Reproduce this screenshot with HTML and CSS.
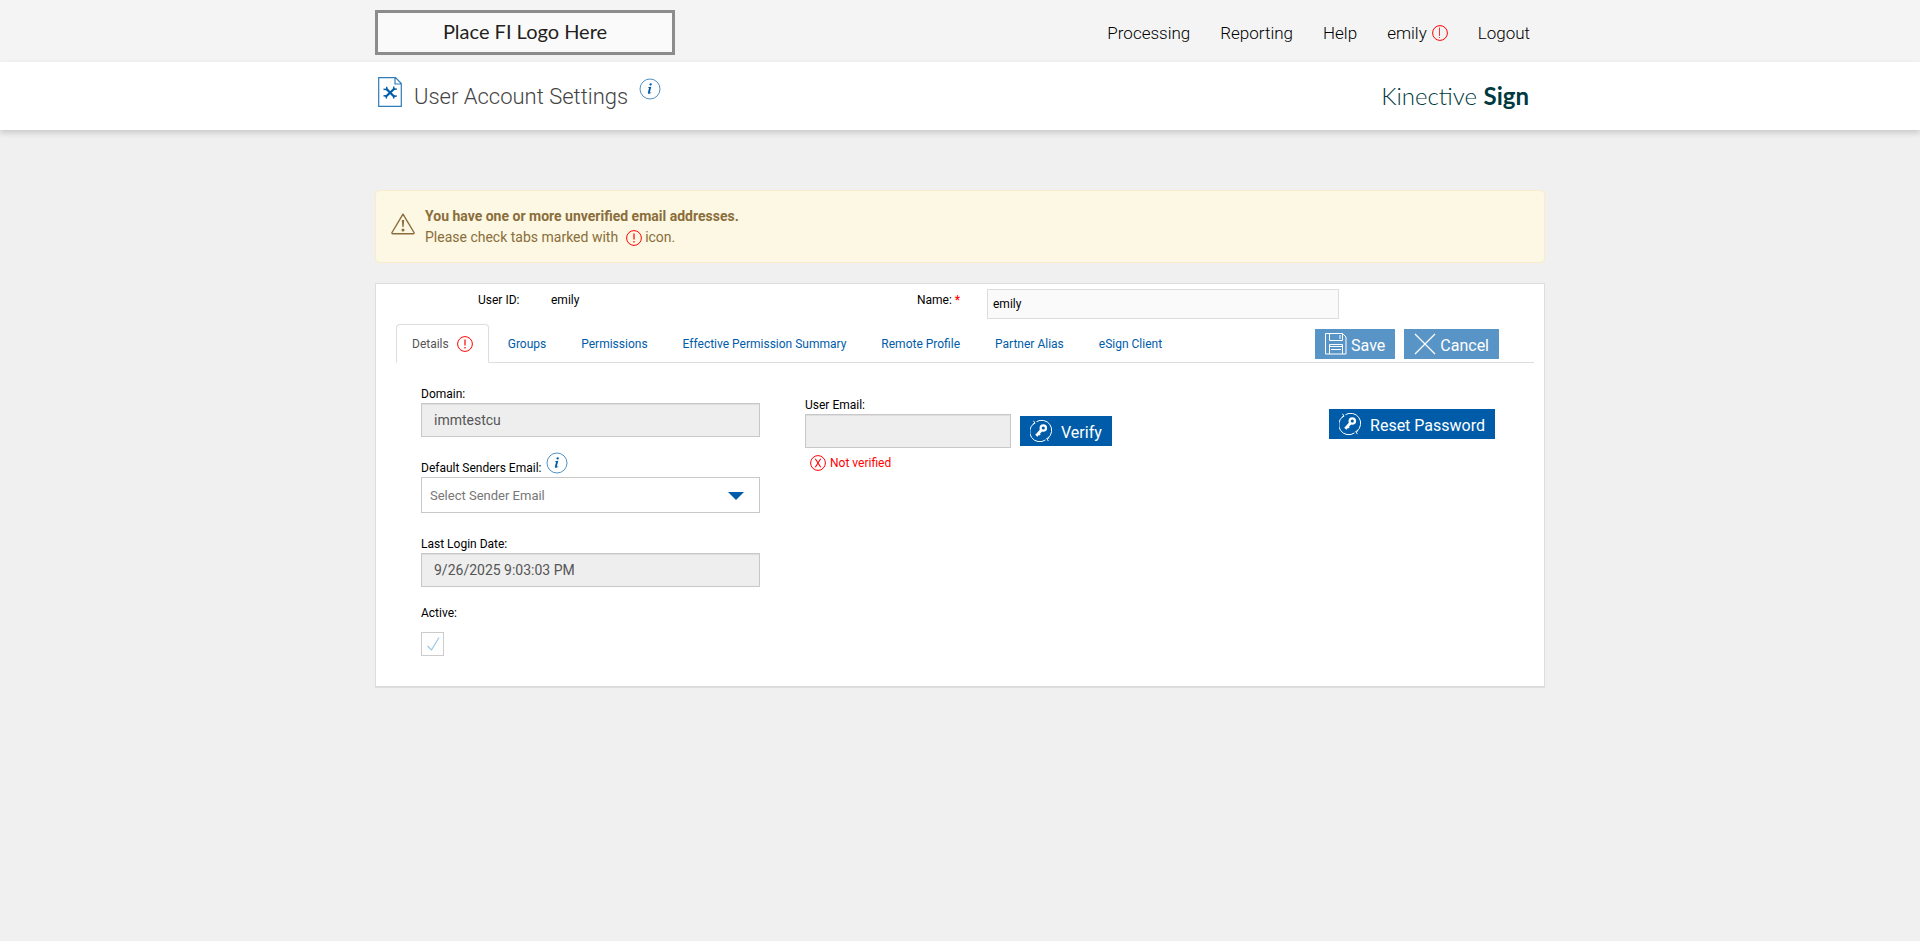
FILE: index.html
```html
<!DOCTYPE html>
<html lang="en">
<head>
<meta charset="utf-8">
<title>User Account Settings</title>
<link rel="stylesheet" href="styles.css">
</head>
<body>
<svg class="sprite" aria-hidden="true">
  <symbol id="info" viewBox="0 0 22 22">
    <circle cx="11" cy="11" r="10" fill="#fff" stroke="#3c84bc" stroke-width=".9"/>
    <path d="M11.7 5.200a1.200 1.200 0 1 1-.1 2.400 1.200 1.200 0 0 1 .1-2.400zM8.900 9.300l3.400-.5-1.500 5.700c-.1.500.4.300 1.200-.6l.4.300c-1.200 1.800-3.900 2.200-3.500.3l1.100-4.200c.1-.5-.4-.5-1.100-.5z" fill="#005ca9"/>
  </symbol>
  <symbol id="alert" viewBox="0 0 16 16">
    <circle cx="8" cy="8" r="7.400" fill="none" stroke="currentColor"/>
    <path d="M8 3.500v6M8 11v1.500" fill="none" stroke="currentColor" stroke-width="1.200"/>
  </symbol>
  <symbol id="alert-thin" viewBox="0 0 16 16">
    <circle cx="8" cy="8" r="7.400" fill="none" stroke="currentColor"/>
    <path d="M7.500 2.500v8.500M7.500 12v1" fill="none" stroke="currentColor" stroke-width=".8"/>
  </symbol>
  <symbol id="key" viewBox="0 0 22 22">
    <g fill="none" stroke="#fff">
      <path d="M4 3.500A10 10 0 0 0 15.500 19.900M18 18A10 10 0 0 0 6.500 1.700" stroke-width="1"/>
      <path d="M3.500.800l1.500 2.400-2.200 1M18.300 21l-1.600-2.600 2.600-.6" stroke-width="1"/>
      <circle cx="13.300" cy="8" r="2.700" stroke-width="2.200"/>
      <path d="M11.300 10.200l-5 5.500" stroke-width="2.800"/>
      <path d="M8.500 13.500l1.700 1.600" stroke-width="1.300"/>
    </g>
  </symbol>
</svg>

<header>
  <div class="topbar">
    <div class="container topbar-row">
      <div class="fi-logo">Place FI Logo Here</div>
      <nav class="main-nav" aria-label="Main">
        <a href="#">Processing</a>
        <a href="#">Reporting</a>
        <a href="#">Help</a>
        <a href="#" class="nav-user">emily <svg class="icon-alert"><use href="#alert-thin"/></svg></a>
        <a href="#">Logout</a>
      </nav>
    </div>
  </div>
  <div class="titlebar">
    <div class="container title-row">
      <svg class="page-icon" viewBox="0 0 24 30">
        <path d="M.7.700h16.800l5.800 5.800v22.800H.7zM17 .7v6.300h6.300" fill="#fff" stroke="#2f7cb8" stroke-width="1.200"/>
        <path d="M8 11.500l8.500 8.500M16.500 11.500L8 19.500" stroke="#005ca9" stroke-width="2.300"/>
        <path d="M5.500 12.300l3 .3.300-2.800M15.700 9.500l.3 2.800 2.800-.3M5.500 18.800l2.500.2.500 2.500M15.500 21.500l.5-2.300 2.800-.2" fill="none" stroke="#005ca9" stroke-width="1.400"/>
      </svg>
      <h1>User Account Settings</h1>
      <svg class="icon-info title-info"><use href="#info"/></svg>
      <div class="brand">Kinective <b>Sign</b></div>
    </div>
  </div>
</header>

<main class="container">
  <div class="notice" role="alert">
    <svg class="warn" viewBox="0 0 24 22">
      <path d="M12 1.200L23 19.500q.4 1.200-.8 1.300H1.800Q.6 20.700 1 19.500z" fill="none" stroke="#8a6d3b" stroke-width="1.400" stroke-linejoin="round"/>
      <path d="M10.800 7h2.400l-.6 7h-1.200z" fill="#8a6d3b"/><circle cx="12" cy="17" r="1.500" fill="#8a6d3b"/>
    </svg>
    <div>
      <strong>You have one or more unverified email addresses.</strong>
      <p>Please check tabs marked with <svg class="icon-alert"><use href="#alert"/></svg> icon.</p>
    </div>
  </div>

  <form class="panel">
    <div class="identity">
      <span class="id-label">User ID:</span>
      <span>emily</span>
      <label class="id-label" for="name">Name: <span class="required">*</span></label>
      <input class="name-input" id="name" type="text" value="emily">
    </div>

    <div class="tabbar">
      <nav class="tabs" aria-label="Account sections">
        <a href="#" class="tab active">Details <svg class="icon-alert"><use href="#alert"/></svg></a>
        <a href="#" class="tab">Groups</a>
        <a href="#" class="tab">Permissions</a>
        <a href="#" class="tab">Effective Permission Summary</a>
        <a href="#" class="tab">Remote Profile</a>
        <a href="#" class="tab">Partner Alias</a>
        <a href="#" class="tab">eSign Client</a>
      </nav>
      <div class="actions">
        <button type="button" class="btn muted">
          <svg class="icon-btn" viewBox="0 0 22 22"><g fill="none" stroke="#fff"><path d="M.5.500h17l3.500 3.500v17H.5zM4.500.5v7h13v-7M15 2v4M4.500 21v-9.500h13V21M4.500 13.500h13M6 16.500h10"/></g></svg>
          Save</button>
        <button type="button" class="btn muted">
          <svg class="icon-btn" viewBox="0 0 22 22"><path d="M1 1l20 20M21 1L1 21" fill="none" stroke="#fff" stroke-width="1.300"/></svg>
          Cancel</button>
      </div>
    </div>

    <div class="details">
      <div class="col-main">
        <div class="field">
          <label for="domain">Domain:</label>
          <input id="domain" type="text" value="immtestcu" disabled>
        </div>
        <div class="field field-sender">
          <label for="sender">Default Senders Email: <svg class="icon-info"><use href="#info"/></svg></label>
          <div class="select-wrap">
            <select id="sender"><option>Select Sender Email</option></select>
          </div>
        </div>
        <div class="field field-login">
          <label for="login">Last Login Date:</label>
          <input id="login" type="text" value="9/26/2025 9:03:03 PM" disabled>
        </div>
        <div class="field field-active">
          <label for="active">Active:</label>
          <span class="check">
            <input id="active" type="checkbox" checked disabled>
            <svg viewBox="0 0 21 22"><path d="M5.500 13l4 4L17 4.500" fill="none" stroke="#9fcbe4" stroke-width="1.300"/></svg>
          </span>
        </div>
      </div>

      <div class="col-email">
        <label for="email">User Email:</label>
        <div class="email-row">
          <input id="email" type="text" value="" disabled>
          <button type="button" class="btn wide"><svg class="icon-btn"><use href="#key"/></svg>Verify</button>
        </div>
        <p class="status">
          <svg class="icon-alert" viewBox="0 0 16 16"><circle cx="8" cy="8" r="7.400" fill="none" stroke="red"/><path d="M5.300 3.800l5.400 8.400M10.700 3.800l-5.400 8.400" fill="none" stroke="red" stroke-width="1.100"/></svg>
          Not verified</p>
      </div>

      <button type="button" class="btn wide reset"><svg class="icon-btn"><use href="#key"/></svg>Reset Password</button>
    </div>
  </form>
</main>
</body>
</html>
```

FILE: styles.css
```css
* { box-sizing: border-box; }

body {
  margin: 0;
  min-height: 100vh;
  background: #f0f0f0;
  color: #000;
  font: 12px/18px Roboto, "Liberation Sans", sans-serif;
}

h1, p { margin: 0; }
a { text-decoration: none; color: inherit; }
input, select, button { font-family: inherit; border-radius: 0; margin: 0; }
.sprite { display: none; }

.container {
  width: 100%;
  max-width: 1170px;
  margin: 0 auto;
}

/* Icons */
.icon-info { width: 22px; height: 22px; flex: none; }
.icon-alert { width: 16px; height: 16px; color: red; flex: none; }
.icon-btn { width: 22px; height: 22px; flex: none; }

/* Top bar */
.topbar { background: #f4f4f4; }
.topbar-row {
  display: flex;
  justify-content: space-between;
  align-items: center;
  padding: 10px 15px 7px 0;
}
.fi-logo {
  width: 300px;
  height: 45px;
  border: 3px solid #8c8c8c;
  background: #fafafa;
  color: #231f20;
  font: 20px/36px Lato, sans-serif;
  text-align: center;
}
.main-nav {
  display: flex;
  gap: 30px;
  font-size: 17px;
  line-height: 20px;
  font-weight: 300;
}
.nav-user { display: flex; align-items: center; gap: 5px; }

/* Title bar */
.titlebar {
  background: #fff;
  box-shadow: 0 3px 6px rgba(0, 0, 0, .16);
}
.title-row {
  display: flex;
  align-items: flex-start;
  height: 68px;
  padding: 15px 16px 0 3px;
}
.page-icon { width: 24px; height: 30px; }
h1 {
  margin: 5px 11px 0 12px;
  font-size: 22px;
  line-height: 30px;
  font-weight: 300;
  color: #444;
}
.title-info { margin-top: 1px; }
.brand {
  margin: 4px 0 0 auto;
  color: #003a40;
  font: 300 24px/30px Lato, sans-serif;
}
.brand b { font-weight: 700; }

/* Notice */
.notice {
  display: flex;
  gap: 10px;
  margin-top: 60px;
  padding: 15px 15px 14px;
  border: 1px solid #faebcc;
  border-radius: 4px;
  background: #fcf8e3;
  color: #8a6d3b;
  font-size: 14px;
  line-height: 21px;
}
.warn { width: 24px; height: 22px; margin-top: 7px; flex: none; }
.notice p { display: flex; align-items: center; gap: 3px; }
.notice .icon-alert { margin-left: 5px; }

/* Panel */
.panel {
  margin-top: 20px;
  padding: 5px 10px 30px 20px;
  border: 1px solid #ddd;
  border-bottom-width: 2px;
  background: #fff;
}
.identity {
  display: grid;
  grid-template-columns: 155px 366px 70px 352px;
  line-height: 22px;
}
.identity > :first-child { padding-left: 82px; }
.name-input {
  height: 30px;
  padding: 0 5px;
  border: 1px solid #ddd;
  background: #fafafa;
  font-size: 12px;
}
.required { color: red; font-weight: 500; }

/* Tabs */
.tabbar {
  display: flex;
  justify-content: space-between;
  margin-top: 5px;
  border-bottom: 1px solid #ddd;
}
.tabs { display: flex; margin-bottom: -1px; }
.tab {
  display: flex;
  align-items: center;
  height: 39px;
  margin-right: 1px;
  padding: 0 16px;
  border: 1px solid transparent;
  color: #005ca9;
}
.tab.active {
  gap: 8px;
  margin-right: 2px;
  padding: 0 15px;
  border-color: #ddd #ddd #fff;
  border-radius: 4px 4px 0 0;
  color: #555;
  background: #fff;
}

/* Buttons */
.actions { display: flex; gap: 9px; padding: 5px 35px 3px 0; }
.btn {
  display: flex;
  align-items: flex-start;
  gap: 4px;
  height: 30px;
  padding: 4px 10px 0;
  border: 0;
  background: #005ca9;
  color: #fff;
  font-size: 16px;
  line-height: 26px;
  white-space: nowrap;
}
.btn.wide { gap: 9px; }
.btn.muted { background: #5994c6; }

/* Details */
.details {
  display: grid;
  grid-template-columns: 339px 1fr auto;
  column-gap: 45px;
  padding: 22px 39px 0 25px;
}
.details label { display: flex; align-items: center; }
.field input[type="text"], .email-row input {
  display: block;
  width: 100%;
  height: 34px;
  padding: 0 12px;
  border: 1px solid #c8c8c8;
  background: #eee;
  color: #555;
  font-size: 14px;
  box-shadow: inset 0 1px 1px rgba(0, 0, 0, .075);
}
.field-sender { margin-top: 15px; }
.field-sender label { gap: 5px; height: 25px; line-height: 18px; align-items: flex-end; }
.field-sender .icon-info { align-self: flex-start; }
.select-wrap { position: relative; }
.select-wrap::after {
  content: "";
  position: absolute;
  right: 16px;
  top: 15px;
  border: 8px solid transparent;
  border-top-color: #005ca9;
  border-bottom: 0;
  pointer-events: none;
}
select {
  display: block;
  width: 100%;
  height: 36px;
  padding: 0 8px;
  border: 1px solid #c8c8c8;
  background: #fff;
  color: #777;
  font-size: 13px;
  appearance: none;
}
.field-login { margin-top: 22px; }
.field-active { margin-top: 17px; }
.check {
  display: block;
  position: relative;
  width: 23px;
  height: 24px;
  margin-top: 10px;
}
.check input {
  display: block;
  width: 100%;
  height: 100%;
  border: 1px solid #ccc;
  background: #fff;
  appearance: none;
}
.check svg { position: absolute; inset: 1px; pointer-events: none; }

.col-email { padding-top: 11px; }
.email-row { display: flex; align-items: center; gap: 9px; }
.email-row input { width: 206px; }
.status {
  display: flex;
  align-items: center;
  gap: 4px;
  margin-top: 6px;
  padding-left: 5px;
  color: red;
}
.reset { margin-top: 24px; }
```
